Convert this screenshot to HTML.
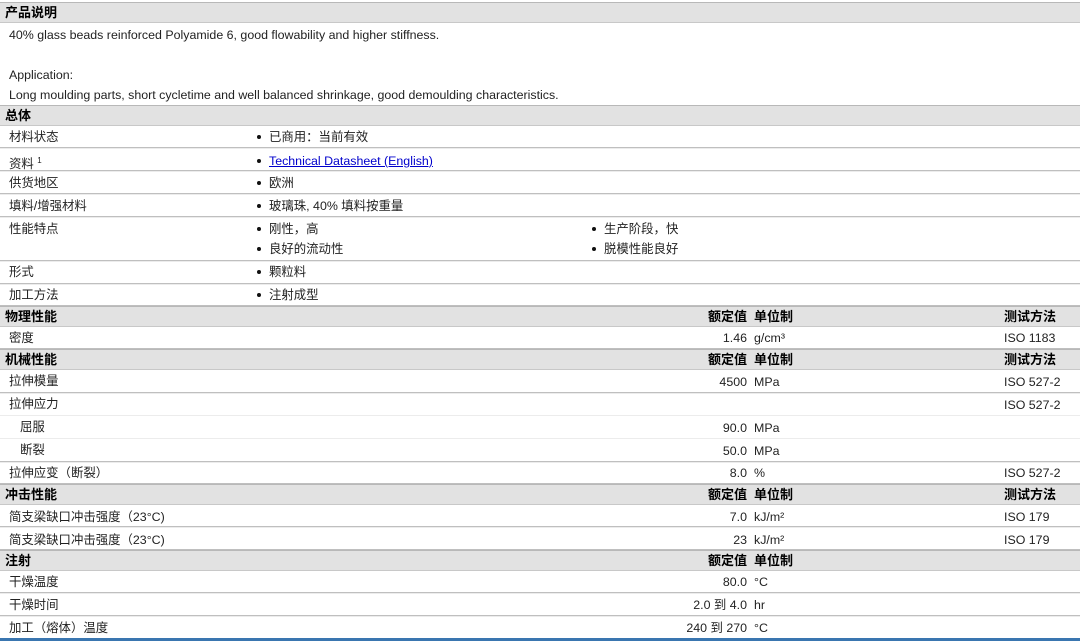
<!DOCTYPE html>
<html><head><meta charset="utf-8"><style>
body{margin:0;width:1080px;height:641px;overflow:hidden;background:#fff;position:relative;font-family:"Liberation Sans","Noto Sans CJK SC",sans-serif;font-size:12.4px;color:#222}
.h{position:absolute;left:0;width:1080px;height:19px;background:#e2e2e2;border-top:1px solid #b8b8b8;border-bottom:1px solid #c8c8c8;font-weight:bold;font-size:13px;line-height:19px;color:#000}
.h span{position:absolute}
.r{position:absolute;left:0;width:1080px;border-bottom:1px solid #bfbfbf;box-shadow:0 1px 0 #ececec}
.t{position:absolute;white-space:nowrap;line-height:14px}
.b::before{content:"";position:absolute;left:-12px;top:5px;width:4px;height:4px;border-radius:50%;background:#111}
.v{position:absolute;right:333px;text-align:right;white-space:nowrap;line-height:14px}
a{color:#00c;text-decoration:underline}
</style></head><body>
<div class="h" style="top:2px"><span style="left:5px">产品说明</span></div>
<div class="t" style="left:9px;top:28px">40% glass beads reinforced Polyamide 6, good flowability and higher stiffness.</div>
<div class="t" style="left:9px;top:68px">Application:</div>
<div class="t" style="left:9px;top:88px">Long moulding parts, short cycletime and well balanced shrinkage, good demoulding characteristics.</div>
<div class="h" style="top:105px"><span style="left:5px">总体</span></div>

<div class="r" style="top:125px;height:22px"></div>
<div class="t" style="left:9px;top:130px">材料状态</div><div class="t b" style="left:269px;top:130px">已商用：当前有效</div>
<div class="r" style="top:148px;height:22px"></div>
<div class="t" style="left:9px;top:154px">资料 <sup style="font-size:8px">1</sup></div><div class="t b" style="left:269px;top:154px"><a>Technical Datasheet (English)</a></div>
<div class="r" style="top:171px;height:22px"></div>
<div class="t" style="left:9px;top:176px">供货地区</div><div class="t b" style="left:269px;top:176px">欧洲</div>
<div class="r" style="top:194px;height:22px"></div>
<div class="t" style="left:9px;top:199px">填料/增强材料</div><div class="t b" style="left:269px;top:199px">玻璃珠, 40% 填料按重量</div>
<div class="r" style="top:217px;height:43px"></div>
<div class="t" style="left:9px;top:222px">性能特点</div>
<div class="t b" style="left:269px;top:222px">刚性，高</div><div class="t b" style="left:604px;top:222px">生产阶段，快</div>
<div class="t b" style="left:269px;top:242px">良好的流动性</div><div class="t b" style="left:604px;top:242px">脱模性能良好</div>
<div class="r" style="top:261px;height:22px"></div>
<div class="t" style="left:9px;top:265px">形式</div><div class="t b" style="left:269px;top:265px">颗粒料</div>
<div class="r" style="top:284px;height:21px"></div>
<div class="t" style="left:9px;top:288px">加工方法</div><div class="t b" style="left:269px;top:288px">注射成型</div>

<div class="h" style="top:306px"><span style="left:5px">物理性能</span><span style="right:333px">额定值</span><span style="left:754px">单位制</span><span style="left:1004px">测试方法</span></div>
<div class="r" style="top:326px;height:22px"></div>
<div class="t" style="left:9px;top:331px">密度</div><div class="v" style="top:331px">1.46</div><div class="t" style="left:754px;top:331px">g/cm³</div><div class="t" style="left:1004px;top:331px">ISO 1183</div>

<div class="h" style="top:349px"><span style="left:5px">机械性能</span><span style="right:333px">额定值</span><span style="left:754px">单位制</span><span style="left:1004px">测试方法</span></div>
<div class="r" style="top:369px;height:23px"></div>
<div class="t" style="left:9px;top:374px">拉伸模量</div><div class="v" style="top:375px">4500</div><div class="t" style="left:754px;top:375px">MPa</div><div class="t" style="left:1004px;top:375px">ISO 527-2</div>
<div style="position:absolute;left:0;top:393px;width:1080px;height:22px;border-bottom:1px solid #ececec"></div>
<div class="t" style="left:9px;top:397px">拉伸应力</div><div class="t" style="left:1004px;top:398px">ISO 527-2</div>
<div style="position:absolute;left:0;top:416px;width:1080px;height:22px;border-bottom:1px solid #ececec"></div>
<div class="t" style="left:20px;top:420px">屈服</div><div class="v" style="top:421px">90.0</div><div class="t" style="left:754px;top:421px">MPa</div>
<div class="r" style="top:439px;height:22px"></div>
<div class="t" style="left:20px;top:443px">断裂</div><div class="v" style="top:444px">50.0</div><div class="t" style="left:754px;top:444px">MPa</div>
<div class="r" style="top:462px;height:21px"></div>
<div class="t" style="left:9px;top:466px">拉伸应变（断裂）</div><div class="v" style="top:466px">8.0</div><div class="t" style="left:754px;top:466px">%</div><div class="t" style="left:1004px;top:466px">ISO 527-2</div>

<div class="h" style="top:484px"><span style="left:5px">冲击性能</span><span style="right:333px">额定值</span><span style="left:754px">单位制</span><span style="left:1004px">测试方法</span></div>
<div class="r" style="top:504px;height:22px"></div>
<div class="t" style="left:9px;top:510px">简支梁缺口冲击强度（23°C)</div><div class="v" style="top:510px">7.0</div><div class="t" style="left:754px;top:510px">kJ/m²</div><div class="t" style="left:1004px;top:510px">ISO 179</div>
<div class="r" style="top:527px;height:22px"></div>
<div class="t" style="left:9px;top:533px">简支梁缺口冲击强度（23°C)</div><div class="v" style="top:533px">23</div><div class="t" style="left:754px;top:533px">kJ/m²</div><div class="t" style="left:1004px;top:533px">ISO 179</div>

<div class="h" style="top:550px"><span style="left:5px">注射</span><span style="right:333px">额定值</span><span style="left:754px">单位制</span></div>
<div class="r" style="top:570px;height:22px"></div>
<div class="t" style="left:9px;top:575px">干燥温度</div><div class="v" style="top:575px">80.0</div><div class="t" style="left:754px;top:575px">°C</div>
<div class="r" style="top:593px;height:22px"></div>
<div class="t" style="left:9px;top:598px">干燥时间</div><div class="v" style="top:598px">2.0 到 4.0</div><div class="t" style="left:754px;top:598px">hr</div>
<div class="t" style="left:9px;top:621px">加工（熔体）温度</div><div class="v" style="top:621px">240 到 270</div><div class="t" style="left:754px;top:621px">°C</div>
<div style="position:absolute;left:0;top:638px;width:1080px;height:3px;background:#3a76b0"></div>
</body></html>
